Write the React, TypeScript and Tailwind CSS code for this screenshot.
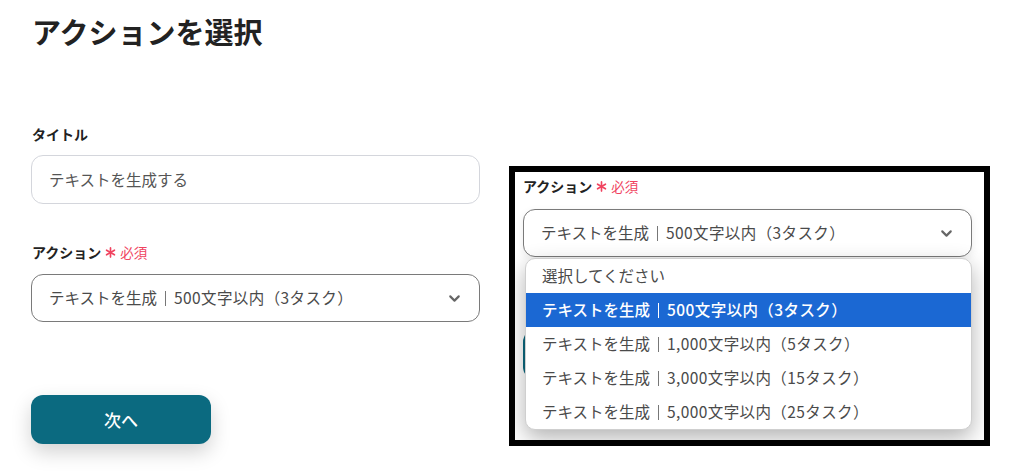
import { ChevronDown } from "lucide-react";

const FONT = "font-['Noto_Sans_CJK_JP','Noto_Sans',sans-serif]";

type Opt = { head: string; tail: string } | string;

const options: Opt[] = [
  "選択してください",
  { head: "テキストを生成", tail: "500文字以内（3タスク）" },
  { head: "テキストを生成", tail: "1,000文字以内（5タスク）" },
  { head: "テキストを生成", tail: "3,000文字以内（15タスク）" },
  { head: "テキストを生成", tail: "5,000文字以内（25タスク）" },
];

function OptText({ opt, light }: { opt: Opt; light?: boolean }) {
  if (typeof opt === "string") return <span>{opt}</span>;
  return (
    <span className="inline-flex items-center">
      {opt.head}
      <span className={`inline-block w-px h-[15px] mx-[8px] ${light ? "bg-white" : "bg-[#777]"}`} />
      <span className="tracking-[0.4px]">{opt.tail}</span>
    </span>
  );
}

function Asterisk() {
  return (
    <svg width="11" height="11" viewBox="0 0 12 12" className="mr-[4px]">
      <g stroke="currentColor" strokeWidth="1.8" strokeLinecap="round">
        <line x1="6" y1="1" x2="6" y2="11" />
        <line x1="1.7" y1="3.5" x2="10.3" y2="8.5" />
        <line x1="1.7" y1="8.5" x2="10.3" y2="3.5" />
      </g>
    </svg>
  );
}

function FieldLabel({ text, required }: { text: string; required?: boolean }) {
  return (
    <div className="flex items-center h-5 leading-5">
      <span className="text-[14px] font-bold text-[#222]">{text}</span>
      {required && (
        <span className="ml-[4px] flex items-center text-[13.5px] text-[#f0435f]">
          <Asterisk />
          必須
        </span>
      )}
    </div>
  );
}

function SelectBox({ shadow }: { shadow?: boolean }) {
  return (
    <div
      className={`flex items-center justify-between h-12 w-[449px] rounded-xl border border-[#7a7a7a] bg-white pl-[17px] pr-[16px] ${
        shadow ? "shadow-[0_3px_8px_rgba(0,0,0,0.08)]" : ""
      }`}
    >
      <span className="text-[15.5px] text-[#4a4a4a]">
        <OptText opt={options[1]} />
      </span>
      <ChevronDown size={17} strokeWidth={3} className="text-[#666]" />
    </div>
  );
}

export default function App() {
  return (
    <div className={`${FONT} bg-white w-[1011px] h-[472px] overflow-hidden flex items-start`}>
      <div className="ml-[31px] w-[449px] flex flex-col">
        <h1 className="mt-[11px] h-10 leading-10 text-[29px] font-bold text-[#222] ml-[1px]">
          アクションを選択
        </h1>

        <div className="mt-[73px] ml-[1px]">
          <FieldLabel text="タイトル" />
        </div>
        <div className="mt-[11px] flex items-center h-[49px] rounded-xl border border-[#d4d6dc] bg-white pl-[17px]">
          <span className="text-[15.5px] text-[#555]">テキストを生成する</span>
        </div>

        <div className="mt-[38px] ml-[1px]">
          <FieldLabel text="アクション" required />
        </div>
        <div className="mt-[12px]">
          <SelectBox />
        </div>

        <button className="mt-[73px] w-[180px] h-[49px] rounded-xl bg-[#0b6a80] text-white text-[17px] font-medium shadow-[0_8px_20px_rgba(0,0,0,0.18)]">
          次へ
        </button>
      </div>

      <div className="ml-[29px] mt-[166px] w-[481px] h-[280px] border-[6px] border-black bg-white overflow-hidden">
        <div className="relative pl-[8px] pt-[4px] flex flex-col">
          <FieldLabel text="アクション" required />
          <div className="mt-[13px] relative z-10">
            <SelectBox shadow />
          </div>

          <div className="mt-[73px] w-[180px] h-[49px] rounded-xl bg-[#0b6a80]" />

          <ul className="absolute left-[10px] top-[86px] w-[447px] rounded-[10px] border border-[#cfcfcf] bg-white overflow-hidden shadow-[0_8px_22px_rgba(0,0,0,0.3)] z-20">
            {options.map((o, i) => (
              <li
                key={i}
                className={`h-[34px] flex items-center pl-[16px] text-[15.5px] ${
                  i === 1 ? "bg-[#1b68d3] text-white font-medium" : "text-[#4a4a4a]"
                }`}
              >
                <OptText opt={o} light={i === 1} />
              </li>
            ))}
          </ul>
        </div>
      </div>
    </div>
  );
}
